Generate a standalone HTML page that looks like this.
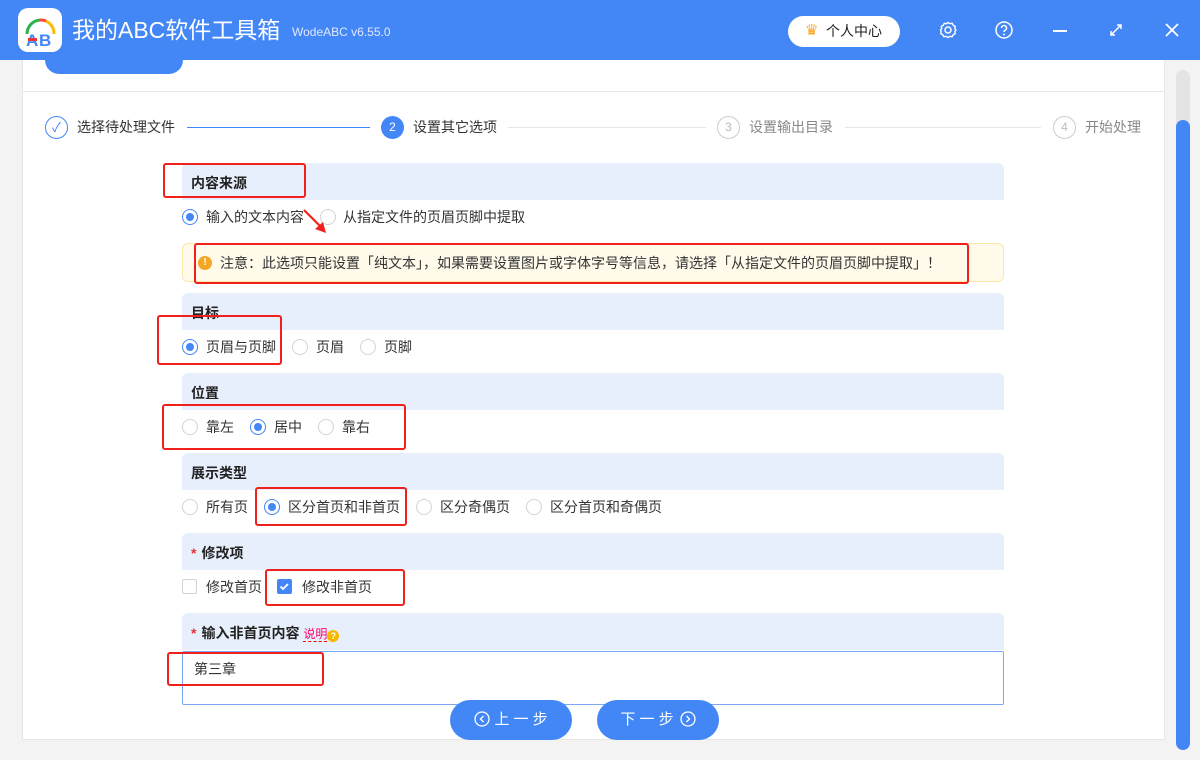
<!DOCTYPE html>
<html><head><meta charset="utf-8">
<style>
*{box-sizing:border-box;margin:0;padding:0}
body{width:1200px;height:760px;overflow:hidden;background:#f3f3f3;font-family:"Liberation Sans","Noto Sans CJK SC",sans-serif;font-size:14px;color:#333;position:relative}
.a{position:absolute}
.hdr{left:0;top:0;width:1200px;height:60px;background:#4387f6}
.panel{left:22px;top:60px;width:1143px;height:680px;background:#fff;border:1px solid #e6e6e6;border-top:none}
.band{left:182px;width:822px;height:37px;background:#e8effc;border-radius:6px 6px 0 0;font-weight:bold;font-size:14px;color:#222;padding:10px 0 0 9px}
.opt{font-size:14px;color:#333;white-space:nowrap;line-height:16px}
.rd{position:absolute;width:16px;height:16px;border:1px solid #d4d4d4;border-radius:50%;background:#fff}
.rd.on{border-color:#4387f6}
.rd.on::after{content:"";position:absolute;left:3px;top:3px;width:8px;height:8px;border-radius:50%;background:#4387f6}
.red{position:absolute;border:2.5px solid #f0211d;border-radius:3px}
.star{color:#e33;margin-right:5px}
.btn{top:700px;width:122px;height:40px;border-radius:20px;background:#4387f6;color:#fff;font-size:15px;text-align:center;line-height:40px}
.st{font-size:14px;line-height:16px}
</style></head><body>
<div class="a hdr"></div>
<div class="a" style="left:18px;top:8px;width:44px;height:44px;background:#fff;border-radius:10px">
<svg width="44" height="44" viewBox="0 0 44 44"><path d="M9 26 A14 14 0 0 1 22 12" stroke="#2bb24c" stroke-width="3" fill="none"/><path d="M22 12 A14 14 0 0 1 28 13" stroke="#f44" stroke-width="3" fill="none"/><path d="M28 13 A14 14 0 0 1 36 26" stroke="#fbbc05" stroke-width="3" fill="none"/>
<text x="8" y="38" font-family="Liberation Sans" font-weight="bold" font-size="17" fill="#4387f6">A</text><text x="21" y="38" font-family="Liberation Sans" font-weight="bold" font-size="17" fill="#4387f6">B</text><rect x="10" y="30" width="9" height="3" fill="#e33"/></svg></div>
<div class="a" style="left:72px;top:15px;color:#fff;font-size:23px;line-height:30px">我的ABC软件工具箱</div>
<div class="a" style="left:292px;top:25px;color:#dfe8ff;font-size:12px">WodeABC v6.55.0</div>
<div class="a" style="left:788px;top:16px;width:112px;height:31px;background:#fff;border-radius:16px;font-size:14px;color:#222;line-height:31px;padding-left:38px">个人中心</div>
<div class="a" style="left:805px;top:21px;font-size:15px;color:#f5a623">♛</div>
<svg class="a" style="left:938px;top:20px" width="20" height="20" viewBox="0 0 20 20"><circle cx="10" cy="10" r="3" fill="none" stroke="#fff" stroke-width="1.5"/><path d="M10 2.5l2 1.2 2.2-.4 1 2 2 1-.4 2.2 1.2 1.5-1.2 1.5.4 2.2-2 1-1 2-2.2-.4-2 1.2-2-1.2-2.2.4-1-2-2-1 .4-2.2L2.5 10l1.2-1.5-.4-2.2 2-1 1-2 2.2.4z" fill="none" stroke="#fff" stroke-width="1.4"/></svg>
<svg class="a" style="left:994px;top:20px" width="20" height="20" viewBox="0 0 20 20"><circle cx="10" cy="10" r="8" fill="none" stroke="#fff" stroke-width="1.5"/><path d="M7.5 8a2.5 2.5 0 1 1 3.5 2.3c-.8.4-1 .9-1 1.7" fill="none" stroke="#fff" stroke-width="1.5"/><circle cx="10" cy="14.5" r="1" fill="#fff"/></svg>
<div class="a" style="left:1053px;top:30px;width:14px;height:2px;background:#fff"></div>
<svg class="a" style="left:1108px;top:22px" width="16" height="16" viewBox="0 0 16 16"><path d="M3 13L13 3M9 3h4v4M3 9v4h4" stroke="#fff" stroke-width="1.5" fill="none"/></svg>
<svg class="a" style="left:1164px;top:22px" width="16" height="16" viewBox="0 0 16 16"><path d="M2 2L14 14M14 2L2 14" stroke="#fff" stroke-width="1.8"/></svg>

<div class="a panel"></div>
<div class="a" style="left:45px;top:60px;width:138px;height:14px;background:#4387f6;border-radius:0 0 14px 14px"></div>
<div class="a" style="left:22px;top:91px;width:1143px;height:1px;background:#e8e8e8"></div>
<div class="a" style="left:1176px;top:70px;width:14px;height:680px;background:#e4e4e4;border-radius:7px"></div>
<div class="a" style="left:1176px;top:120px;width:14px;height:630px;background:#4387f6;border-radius:7px"></div>

<div class="a" style="left:45px;top:116px;width:23px;height:23px;border:1px solid #4387f6;border-radius:50%;color:#4387f6;text-align:center;line-height:21px;font-size:13px">✓</div>
<div class="a st" style="left:77px;top:119px;color:#333">选择待处理文件</div>
<div class="a" style="left:187px;top:127px;width:183px;height:1px;background:#4387f6"></div>
<div class="a" style="left:381px;top:116px;width:23px;height:23px;background:#4387f6;border-radius:50%;color:#fff;text-align:center;line-height:23px;font-size:12px">2</div>
<div class="a st" style="left:413px;top:119px;color:#333">设置其它选项</div>
<div class="a" style="left:508px;top:127px;width:198px;height:1px;background:#e6e6e6"></div>
<div class="a" style="left:717px;top:116px;width:23px;height:23px;border:1px solid #ccc;border-radius:50%;color:#bbb;text-align:center;line-height:21px;font-size:12px">3</div>
<div class="a st" style="left:749px;top:119px;color:#888">设置输出目录</div>
<div class="a" style="left:845px;top:127px;width:196px;height:1px;background:#e6e6e6"></div>
<div class="a" style="left:1053px;top:116px;width:23px;height:23px;border:1px solid #ccc;border-radius:50%;color:#bbb;text-align:center;line-height:21px;font-size:12px">4</div>
<div class="a st" style="left:1085px;top:119px;color:#888">开始处理</div>

<div class="a band" style="top:163px">内容来源</div>
<div class="rd on" style="left:182px;top:209px"></div><div class="a opt" style="left:206px;top:209px">输入的文本内容</div>
<div class="rd" style="left:320px;top:209px"></div><div class="a opt" style="left:343px;top:209px">从指定文件的页眉页脚中提取</div>

<div class="a" style="left:182px;top:243px;width:822px;height:39px;background:#fffaea;border:1px solid #fde7a8;border-radius:6px"></div>
<div class="a" style="left:198px;top:256px;width:14px;height:14px;border-radius:50%;background:#f5a623;color:#fff;font-size:10px;text-align:center;line-height:14px;font-weight:bold">!</div>
<div class="a opt" style="left:220px;top:255px">注意：此选项只能设置「纯文本」，如果需要设置图片或字体字号等信息，请选择「从指定文件的页眉页脚中提取」！</div>

<div class="a band" style="top:293px">目标</div>
<div class="rd on" style="left:182px;top:339px"></div><div class="a opt" style="left:206px;top:339px">页眉与页脚</div>
<div class="rd" style="left:292px;top:339px"></div><div class="a opt" style="left:316px;top:339px">页眉</div>
<div class="rd" style="left:360px;top:339px"></div><div class="a opt" style="left:384px;top:339px">页脚</div>

<div class="a band" style="top:373px">位置</div>
<div class="rd" style="left:182px;top:419px"></div><div class="a opt" style="left:206px;top:419px">靠左</div>
<div class="rd on" style="left:250px;top:419px"></div><div class="a opt" style="left:274px;top:419px">居中</div>
<div class="rd" style="left:318px;top:419px"></div><div class="a opt" style="left:342px;top:419px">靠右</div>

<div class="a band" style="top:453px">展示类型</div>
<div class="rd" style="left:182px;top:499px"></div><div class="a opt" style="left:206px;top:499px">所有页</div>
<div class="rd on" style="left:264px;top:499px"></div><div class="a opt" style="left:288px;top:499px">区分首页和非首页</div>
<div class="rd" style="left:416px;top:499px"></div><div class="a opt" style="left:440px;top:499px">区分奇偶页</div>
<div class="rd" style="left:526px;top:499px"></div><div class="a opt" style="left:550px;top:499px">区分首页和奇偶页</div>

<div class="a band" style="top:533px"><span class="star">*</span>修改项</div>
<div class="a" style="left:182px;top:579px;width:15px;height:15px;border:1px solid #d4d4d4;border-radius:2px"></div><div class="a opt" style="left:206px;top:579px">修改首页</div>
<div class="a" style="left:277px;top:579px;width:15px;height:15px;background:#4387f6;border-radius:2px"><svg width="15" height="15" viewBox="0 0 15 15"><path d="M3.5 7.5l2.5 2.5 5-5" stroke="#fff" stroke-width="1.8" fill="none"/></svg></div><div class="a opt" style="left:302px;top:579px">修改非首页</div>

<div class="a band" style="top:613px"><span class="star">*</span>输入非首页内容 <span style="font-weight:normal;color:#f06;border-bottom:1px dashed #f00;font-size:12px">说明</span><span style="display:inline-block;width:12px;height:12px;border-radius:50%;background:#f5b800;color:#fff;font-size:9px;text-align:center;line-height:12px;vertical-align:-1px">?</span></div>
<div class="a" style="left:182px;top:651px;width:822px;height:54px;border:1px solid #7aa8f5;border-radius:2px;background:#fff;padding:7px 11px;font-size:14px">第三章</div>

<div class="a btn" style="left:450px">
<svg style="vertical-align:-3px;margin-right:4px" width="16" height="16" viewBox="0 0 16 16"><circle cx="8" cy="8" r="7" fill="none" stroke="#fff" stroke-width="1.3"/><path d="M9.5 5L6.5 8l3 3" fill="none" stroke="#fff" stroke-width="1.3"/></svg>上 一 步</div>
<div class="a btn" style="left:597px">下 一 步<svg style="vertical-align:-3px;margin-left:6px" width="16" height="16" viewBox="0 0 16 16"><circle cx="8" cy="8" r="7" fill="none" stroke="#fff" stroke-width="1.3"/><path d="M6.5 5l3 3-3 3" fill="none" stroke="#fff" stroke-width="1.3"/></svg></div>

<div class="red" style="left:163px;top:163px;width:143px;height:35px"></div>
<div class="red" style="left:194px;top:243px;width:775px;height:41px"></div>
<div class="red" style="left:157px;top:315px;width:125px;height:50px"></div>
<div class="red" style="left:162px;top:404px;width:244px;height:46px"></div>
<div class="red" style="left:255px;top:487px;width:152px;height:39px"></div>
<div class="red" style="left:265px;top:569px;width:140px;height:37px"></div>
<div class="red" style="left:167px;top:652px;width:157px;height:34px"></div>
<svg class="a" style="left:300px;top:205px" width="32" height="32" viewBox="0 0 32 32"><path d="M4 5L22 23" stroke="#f0211d" stroke-width="2.2"/><path d="M26 28L15 24L23 17z" fill="#f0211d"/></svg>
</body></html>
